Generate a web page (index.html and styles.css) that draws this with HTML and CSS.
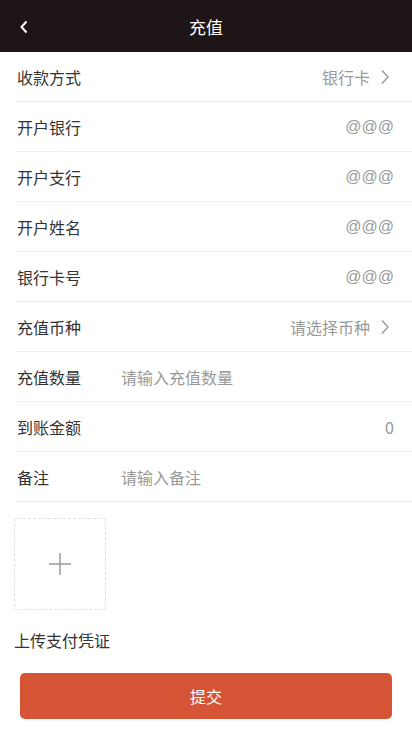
FILE: index.html
```html
<!DOCTYPE html>
<html lang="zh">
<head>
    <meta charset="UTF-8">
    <title>充值</title>
    <link rel="stylesheet" href="styles.css">
</head>
<body>
<header class="nav">
    <span class="nav-back">
        <svg width="10" height="14" viewBox="0 0 10 14"><path d="M7.5 1.5 L2.5 7 L7.5 12.5" fill="none" stroke="#fff" stroke-width="2"/></svg>
    </span>
    <span class="nav-title">充值</span>
</header>
<div class="form">
    <div class="row">
        <span class="label">收款方式</span>
        <span class="value">银行卡</span>
        <svg class="arrow" width="10" height="16" viewBox="0 0 10 16"><path d="M2 1.5 L8 8 L2 14.5" fill="none" stroke="#999" stroke-width="1.4"/></svg>
    </div>
    <div class="row">
        <span class="label">开户银行</span>
        <span class="value at">@@@</span>
    </div>
    <div class="row">
        <span class="label">开户支行</span>
        <span class="value at">@@@</span>
    </div>
    <div class="row">
        <span class="label">开户姓名</span>
        <span class="value at">@@@</span>
    </div>
    <div class="row">
        <span class="label">银行卡号</span>
        <span class="value at">@@@</span>
    </div>
    <div class="row">
        <span class="label">充值币种</span>
        <span class="value">请选择币种</span>
        <svg class="arrow" width="10" height="16" viewBox="0 0 10 16"><path d="M2 1.5 L8 8 L2 14.5" fill="none" stroke="#999" stroke-width="1.4"/></svg>
    </div>
    <div class="row">
        <span class="label">充值数量</span>
        <span class="input">请输入充值数量</span>
    </div>
    <div class="row">
        <span class="label">到账金额</span>
        <span class="value">0</span>
    </div>
    <div class="row">
        <span class="label">备注</span>
        <span class="input">请输入备注</span>
    </div>
</div>
<div class="upload">
    <div class="upload-box">
        <svg width="24" height="24" viewBox="0 0 24 24"><path d="M12 1 V23 M1 12 H23" stroke="#999" stroke-width="1.5"/></svg>
    </div>
    <p class="upload-label">上传支付凭证</p>
</div>
<div class="submit-wrap">
    <button class="submit">提交</button>
</div>
</body>
</html>
```

FILE: styles.css
```css
* {
    box-sizing: border-box;
    margin: 0;
    padding: 0;
}
body {
    font-family: "Noto Sans CJK SC", "Noto Sans", sans-serif;
    background: #fff;
    color: #333;
    font-size: 16px;
}
.nav {
    height: 52px;
    background: #1f1516;
    display: flex;
    align-items: center;
    justify-content: center;
    position: relative;
}
.nav-back {
    position: absolute;
    left: 19px;
    top: 20px;
    display: flex;
}
.nav-title {
    color: #fff;
    font-size: 17px;
}
.form {
    padding-left: 16px;
}
.row {
    height: 50px;
    display: flex;
    align-items: center;
    border-bottom: 1px solid #f0f0f0;
    padding-right: 18px;
}
.label {
    width: 105px;
    padding-left: 1px;
    flex-shrink: 0;
}
.value {
    margin-left: auto;
    color: #999;
}
.value.at {
    font-family: "Liberation Sans", sans-serif;
    font-size: 16px;
}
.arrow {
    margin-left: 10px;
    margin-right: 4px;
}
.input {
    color: #999;
}
.upload {
    padding: 16px 14px 0;
}
.upload-box {
    width: 92px;
    height: 92px;
    border: 1px dashed #e0e0e0;
    border-radius: 4px;
    display: flex;
    align-items: center;
    justify-content: center;
}
.upload-label {
    margin-top: 18px;
    line-height: 24px;
}
.submit-wrap {
    padding: 21px 20px 0;
}
.submit {
    width: 100%;
    height: 46px;
    border: none;
    border-radius: 5px;
    background: #d65436;
    color: #fff;
    font-family: inherit;
    font-size: 16px;
}
```
